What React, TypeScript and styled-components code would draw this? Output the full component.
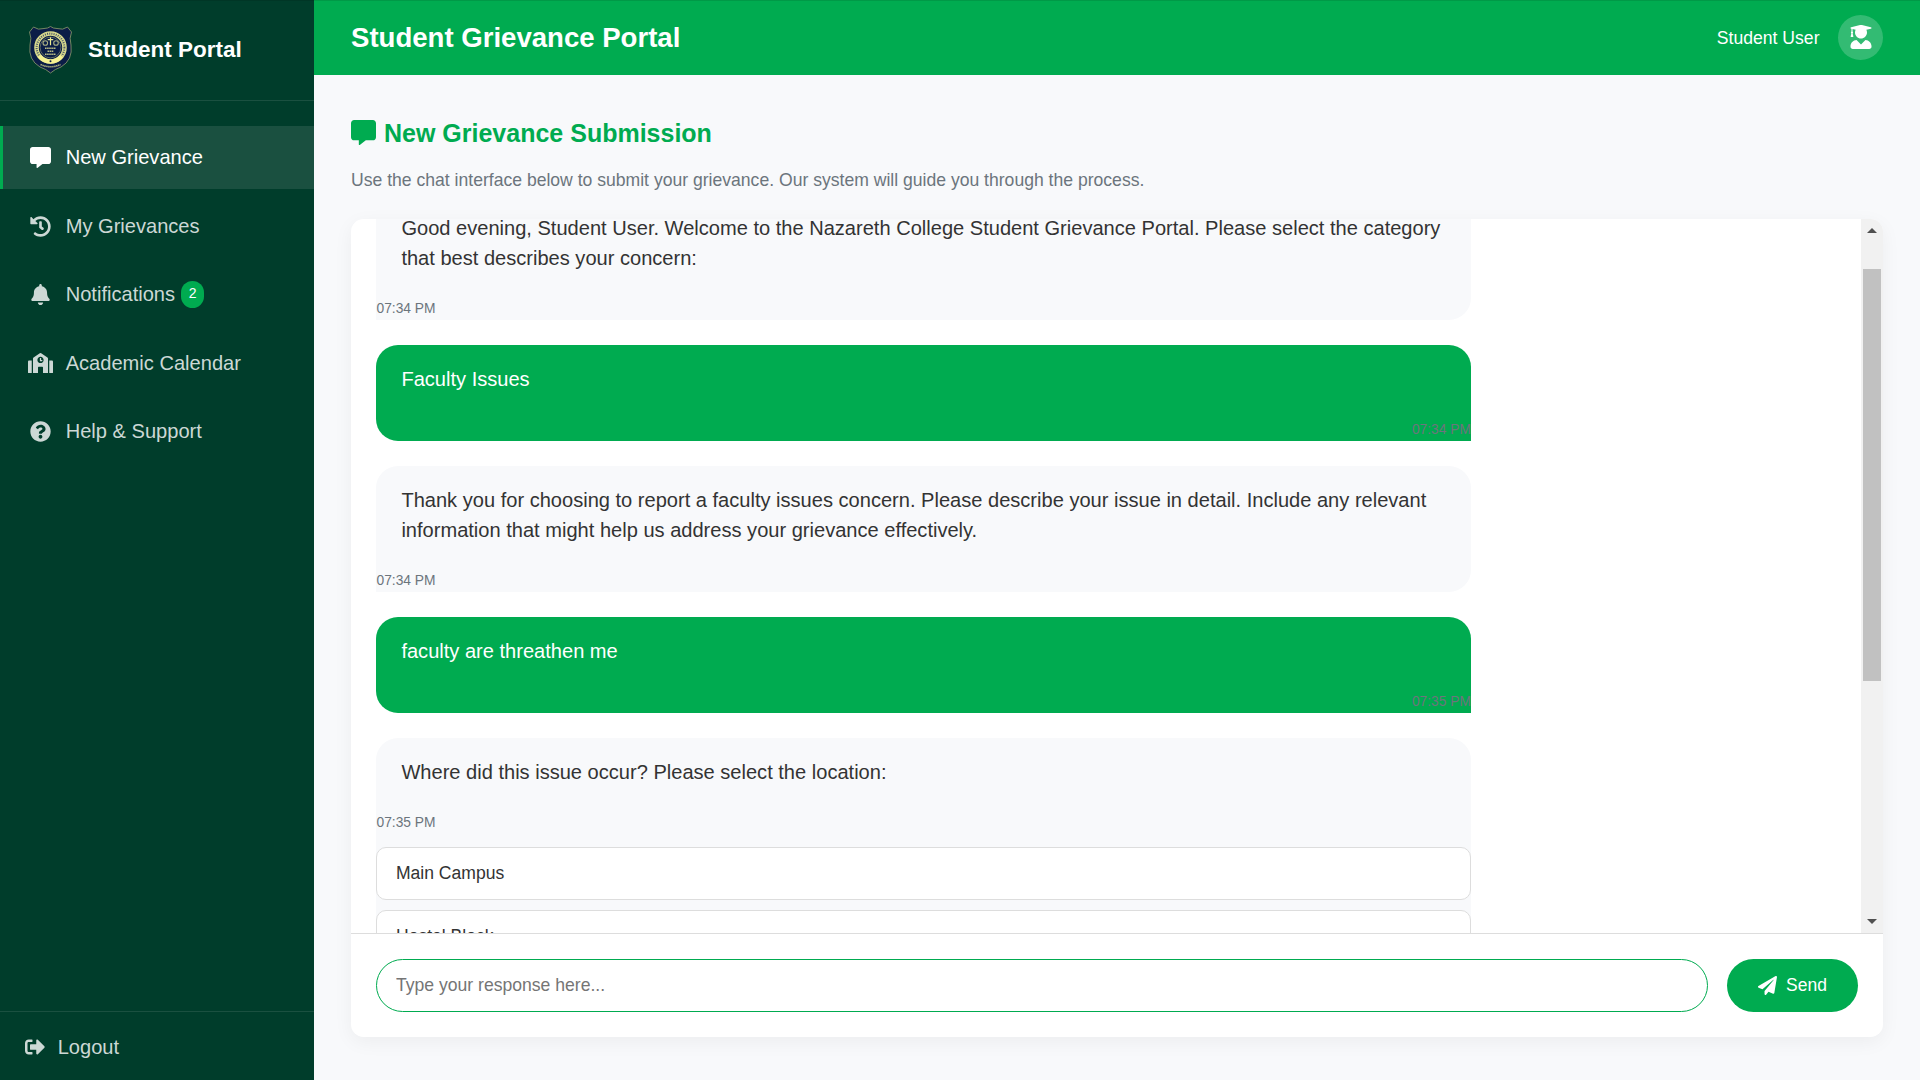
import React from "react";
import styled, { createGlobalStyle, css } from "styled-components";
import { FaHistory, FaBell, FaSchool, FaQuestionCircle, FaSignOutAlt, FaUserGraduate, FaPaperPlane } from "react-icons/fa";

const GREEN = "#00ab50";
const DARK = "#003d2b";

const Global = createGlobalStyle`
  * { box-sizing: border-box; margin: 0; padding: 0; }
  body { background: #f8f9fb; font-family: "Liberation Sans", Arial, sans-serif; color: #333; overflow: hidden; }
  button, input { font-family: inherit; }
`;

const Page = styled.div`
  display: flex;
  width: 1920px;
  height: 1080px;
`;

const Sidebar = styled.aside`
  width: 314px;
  flex: none;
  display: flex;
  flex-direction: column;
  background: ${DARK};
  box-shadow: inset 0 1px 0 rgba(0, 0, 0, 0.1);
  color: #fff;
`;

const Brand = styled.div`
  height: 101px;
  padding: 0 28px;
  display: flex;
  align-items: center;
  gap: 15px;
  border-bottom: 1px solid #1a5040;
`;

const BrandName = styled.span`
  font-size: 22.5px;
  font-weight: 700;
  line-height: 30px;
`;

const Nav = styled.nav`
  flex: 1;
  padding-top: 25px;
  display: flex;
  flex-direction: column;
  gap: 5.5px;
`;

const NavItem = styled.a<{ $active?: boolean }>`
  height: 63px;
  padding: 0 25px;
  display: flex;
  align-items: center;
  font-size: 20.08px;
  color: ${(p) => (p.$active ? "#fff" : "#ccd8d5")};
  border-left: 3px solid ${(p) => (p.$active ? GREEN : "transparent")};
  background: ${(p) => (p.$active ? "#1a5040" : "transparent")};
`;

const NavIcon = styled.span`
  width: 25px;
  margin-right: 12.7px;
  display: flex;
  justify-content: center;
`;

const Badge = styled.span`
  margin-left: 6px;
  width: 23px;
  height: 27px;
  border-radius: 12px;
  background: ${GREEN};
  color: #fff;
  font-size: 14px;
  line-height: 25px;
  text-align: center;
`;

const Logout = styled.a`
  height: 69px;
  padding: 2px 25px 0;
  display: flex;
  align-items: center;
  gap: 12.7px;
  font-size: 20.08px;
  color: #ccd8d5;
  border-top: 1px solid #1a5040;
`;

const Main = styled.main`
  flex: 1;
  display: flex;
  flex-direction: column;
  min-width: 0;
`;

const Header = styled.header`
  height: 75px;
  flex: none;
  padding: 0 37px;
  display: flex;
  align-items: center;
  justify-content: space-between;
  background: ${GREEN};
  box-shadow: inset 0 1px 0 rgba(0, 0, 0, 0.1);
  color: #fff;
`;

const Title = styled.h1`
  font-size: 27.57px;
  font-weight: 700;
`;

const User = styled.div`
  display: flex;
  align-items: center;
  gap: 18.5px;
  font-size: 17.6px;
`;

const UserName = styled.span`
  padding-top: 1px;
`;

const Avatar = styled.span`
  width: 45px;
  height: 45px;
  border-radius: 50%;
  background: rgba(255, 255, 255, 0.2);
  display: grid;
  place-items: center;
  padding-bottom: 2px;
`;

const Content = styled.section`
  padding: 37px 37px 43px;
  flex: 1;
  display: flex;
  flex-direction: column;
  min-height: 0;
`;

const Heading = styled.h2`
  height: 42px;
  display: flex;
  align-items: center;
  gap: 8px;
  font-size: 25px;
  color: ${GREEN};
`;

const HeadingIcon = styled.span`
  display: flex;
  padding-bottom: 1px;
`;

const Intro = styled.p`
  margin-top: 12px;
  height: 53px;
  font-size: 17.58px;
  line-height: 29px;
  color: #6c757d;
`;

const Card = styled.div`
  flex: 1;
  min-height: 0;
  display: flex;
  flex-direction: column;
  background: #fff;
  border-radius: 12.5px;
  box-shadow: 0 5px 19px rgba(0, 0, 0, 0.05);
  overflow: hidden;
`;

const ChatArea = styled.div`
  flex: 1;
  min-height: 0;
  display: flex;
  overflow: hidden;
`;

const Messages = styled.div`
  flex: 1;
  padding: 0 25px;
  display: flex;
  flex-direction: column;
  gap: 25px;
  overflow: hidden;
`;

const Message = styled.article<{ $sent?: boolean; $h: number; $clipped?: boolean }>`
  flex: none;
  width: 1095px;
  height: ${(p) => p.$h}px;
  display: flex;
  flex-direction: column;
  border-radius: 22px;
  background: #f8f9fb;
  color: #333;
  border-bottom-left-radius: 0;
  ${(p) =>
    p.$sent &&
    css`
      background: ${GREEN};
      color: #fff;
      border-bottom-left-radius: 22px;
      border-bottom-right-radius: 0;
    `}
  ${(p) =>
    p.$clipped &&
    css`
      margin-top: -25px;
    `}
`;

const Text = styled.p`
  padding: 19px 25px 19px 25.4px;
  font-size: 20.07px;
  line-height: 30px;
`;

const Time = styled.time<{ $sent?: boolean }>`
  height: 28px;
  padding: 7px 0 0 0.5px;
  font-size: 13.8px;
  line-height: 20px;
  color: #6c757d;
  text-align: ${(p) => (p.$sent ? "right" : "left")};
`;

const Options = styled.div`
  display: flex;
  flex-direction: column;
  gap: 10px;
  padding-top: 13px;
`;

const Option = styled.button`
  height: 53px;
  border: 1px solid #ddd;
  border-radius: 10px;
  background: #fff;
  text-align: left;
  padding: 0 19px;
  font-size: 17.55px;
  color: #333;
`;

const Scrollbar = styled.div`
  width: 22px;
  padding: 9px 2px;
  background: #f1f1f1;
  display: flex;
  flex-direction: column;
  align-items: center;
`;

const Thumb = styled.div`
  width: 18px;
  height: 412px;
  margin-top: 35px;
  margin-bottom: auto;
  background: #c1c1c1;
`;

const Arrow = styled.svg`
  display: block;
  width: 10px;
  height: 6px;
  flex: none;
`;

const Composer = styled.form`
  height: 104px;
  flex: none;
  padding: 25px;
  display: flex;
  gap: 19px;
  border-top: 1px solid #ddd;
`;

const Input = styled.input`
  flex: 1;
  height: 53px;
  border: 1px solid ${GREEN};
  border-radius: 27px;
  padding: 0 19px;
  font-size: 17.58px;
  outline: none;
  &::placeholder { color: #757575; }
`;

const Send = styled.button`
  width: 131px;
  height: 53px;
  border: 0;
  border-radius: 27px;
  background: ${GREEN};
  color: #fff;
  font-size: 17.5px;
  display: flex;
  align-items: center;
  justify-content: center;
  gap: 9px;
`;

const ChatBubble = ({ size }: { size: number }) => (
  <svg width={size} height={size} viewBox="0 0 512 512" fill="currentColor">
    <path d="M448 0H64C28.700 0 0 28.700 0 64v288c0 35.300 28.700 64 64 64h96v84c0 9.800 11.200 15.500 19.100 9.700L304 416h144c35.300 0 64-28.700 64-64V64c0-35.300-28.700-64-64-64z" />
  </svg>
);

const Crest = () => (
  <svg width="45" height="50" viewBox="0 0 45 50">
    <path d="M5.500 2 Q10 5.500 16 3.500 Q20 3.500 22.500 1.500 Q25 3.500 29 3.500 Q35 5.500 39.500 2 L43.500 7 Q41 13 43 20 Q45 35 33 42 Q27 44 22.500 48 Q18 44 12 42 Q0 35 2 20 Q4 13 1.500 7 Z" fill="#0b1d47" stroke="#7f8f68" strokeWidth="0.9" />
    <circle cx="22.500" cy="22.500" r="14" fill="none" stroke="#d9da8c" strokeWidth="4.600" />
    <circle cx="22.500" cy="22.500" r="13.900" fill="none" stroke="#4d5868" strokeWidth="2" strokeDasharray="1 1.200" />
    <circle cx="22.500" cy="22.500" r="10.400" fill="none" stroke="#aeb27c" strokeWidth="0.500" />
    <path d="M11.300 31 A14 14 0 0 0 33.700 31" fill="none" stroke="#f5f192" strokeWidth="4.200" />
    <path d="M22.500 12.200v8M19.700 14.700h5.600" stroke="#f0ee92" strokeWidth="1.200" />
    <circle cx="17.300" cy="18" r="2.300" fill="none" stroke="#aab083" strokeWidth="1.100" />
    <circle cx="28" cy="18" r="2.300" fill="none" stroke="#aab083" strokeWidth="1.100" />
    <path d="M17 23.200h11M19.500 26.200h6M17 29.200h11" stroke="#b9bd86" strokeWidth="1.600" strokeDasharray="1.600 0.500" />
    <path d="M12.500 39.500 Q22.500 44 32.500 39.500" fill="none" stroke="#a8ad7c" strokeWidth="1.600" strokeDasharray="1.500 0.500" />
    <circle cx="22.500" cy="36.300" r="1" fill="#0b1d47" />
  </svg>
);

export default function App() {
  return (
    <Page>
      <Global />
      <Sidebar>
        <Brand>
          <Crest />
          <BrandName>Student Portal</BrandName>
        </Brand>
        <Nav>
          <NavItem $active><NavIcon><ChatBubble size={21} /></NavIcon>New Grievance</NavItem>
          <NavItem><NavIcon><FaHistory size={21} /></NavIcon>My Grievances</NavItem>
          <NavItem><NavIcon><FaBell size={21} /></NavIcon>Notifications<Badge>2</Badge></NavItem>
          <NavItem><NavIcon><FaSchool size={26} /></NavIcon>Academic Calendar</NavItem>
          <NavItem><NavIcon><FaQuestionCircle size={21} /></NavIcon>Help &amp; Support</NavItem>
        </Nav>
        <Logout><FaSignOutAlt size={20} />Logout</Logout>
      </Sidebar>
      <Main>
        <Header>
          <Title>Student Grievance Portal</Title>
          <User><UserName>Student User</UserName><Avatar><FaUserGraduate size={24} /></Avatar></User>
        </Header>
        <Content>
          <Heading><HeadingIcon><ChatBubble size={25} /></HeadingIcon>New Grievance Submission</Heading>
          <Intro>Use the chat interface below to submit your grievance. Our system will guide you through the process.</Intro>
          <Card>
            <ChatArea>
              <Messages>
                <Message $h={126} $clipped>
                  <Text>Good evening, Student User. Welcome to the Nazareth College Student Grievance Portal. Please select the category that best describes your concern:</Text>
                  <Time>07:34 PM</Time>
                </Message>
                <Message $sent $h={96}>
                  <Text>Faculty Issues</Text>
                  <Time $sent>07:34 PM</Time>
                </Message>
                <Message $h={126}>
                  <Text>Thank you for choosing to report a faculty issues concern. Please describe your issue in detail. Include any relevant information that might help us address your grievance effectively.</Text>
                  <Time>07:34 PM</Time>
                </Message>
                <Message $sent $h={96}>
                  <Text>faculty are threathen me</Text>
                  <Time $sent>07:35 PM</Time>
                </Message>
                <Message $h={300}>
                  <Text>Where did this issue occur? Please select the location:</Text>
                  <Time>07:35 PM</Time>
                  <Options>
                    <Option>Main Campus</Option>
                    <Option>Hostel Block</Option>
                  </Options>
                </Message>
              </Messages>
              <Scrollbar>
                <Arrow viewBox="0 0 10 6"><path d="M5 0L10 5H0Z" fill="#505050" /></Arrow>
                <Thumb />
                <Arrow viewBox="0 0 10 6"><path d="M5 6L10 1H0Z" fill="#505050" /></Arrow>
              </Scrollbar>
            </ChatArea>
            <Composer>
              <Input placeholder="Type your response here..." />
              <Send type="button"><FaPaperPlane size={19} />Send</Send>
            </Composer>
          </Card>
        </Content>
      </Main>
    </Page>
  );
}
